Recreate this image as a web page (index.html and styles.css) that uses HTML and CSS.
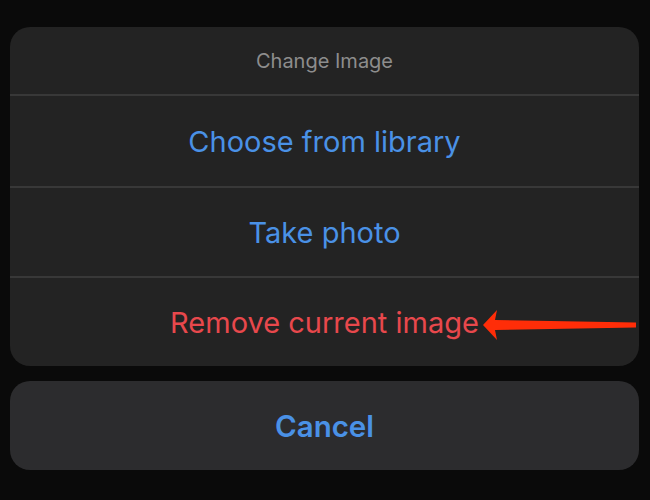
FILE: index.html
```html
<!DOCTYPE html>
<html>
<head>
<meta charset="utf-8">
<link rel="stylesheet" href="styles.css">
</head>
<body>
<div class="sheet">
  <div class="group">
    <div class="title">Change Image</div>
    <div class="row action">Choose from library</div>
    <div class="row action">Take photo</div>
    <div class="row destructive">
      <span class="label">Remove current image</span>
      <svg class="arrow" width="156" height="32" viewBox="0 0 156 32">
        <polygon points="0,16 14,1 12,11 153,13.5 153,18.5 12,21 14,31" fill="#ff2d08"/>
      </svg>
    </div>
  </div>
  <div class="cancel">Cancel</div>
</div>
</body>
</html>
```
FILE: styles.css
```css
html, body {
  margin: 0;
  padding: 0;
  background: #0a0a0a;
}
body {
  width: 650px;
  height: 500px;
  overflow: hidden;
  font-family: Inter, "Noto Sans", sans-serif;
}
.sheet {
  display: flex;
  flex-direction: column;
  gap: 15px;
  padding: 27px 11px 0 10px;
}
.group {
  background: #232323;
  border-radius: 20px;
  overflow: hidden;
  display: flex;
  flex-direction: column;
}
.title {
  height: 69px;
  display: flex;
  align-items: center;
  justify-content: center;
  color: #8d8d8d;
  font-size: 20px;
  border-bottom: 2px solid #383838;
  box-sizing: border-box;
}
.row {
  height: 90px;
  display: flex;
  align-items: center;
  justify-content: center;
  font-size: 29px;
  box-sizing: border-box;
}
.row + .row {
  border-top: 2px solid #383838;
}
.action {
  color: #4a91e6;
}
.destructive {
  color: #e8484c;
  position: relative;
}
.arrow {
  position: absolute;
  left: 473px;
  top: 31px;
}
.cancel {
  height: 89px;
  background: #2c2c2e;
  border-radius: 20px;
  display: flex;
  align-items: center;
  justify-content: center;
  color: #4a91e6;
  font-size: 29.5px;
  font-weight: 600;
}
```
